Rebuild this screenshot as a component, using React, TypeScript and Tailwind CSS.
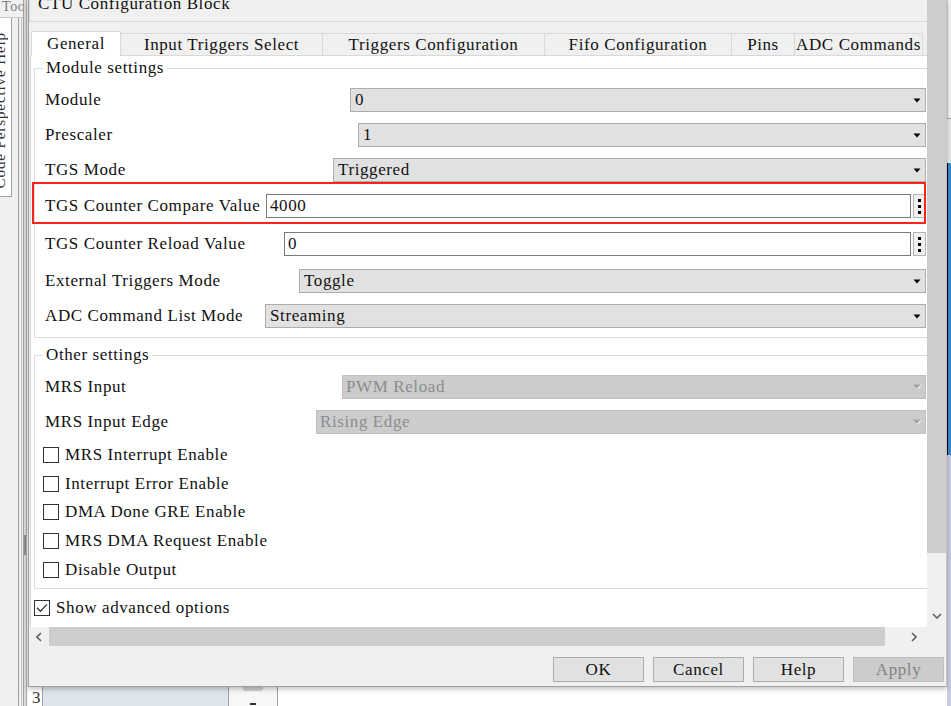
import React from "react";

function Caret({ disabled }: { disabled?: boolean }) {
  if (disabled) {
    return (
      <svg width="10" height="6" viewBox="0 0 10 6" className="shrink-0">
        <path d="M1 0.5H8.5L4.75 4.5Z" fill="#a3a3a3" />
        <path d="M9 1.2L5.4 5.2" stroke="#ffffff" strokeWidth="1" />
      </svg>
    );
  }
  return (
    <svg width="8" height="5" viewBox="0 0 8 5" className="shrink-0">
      <path d="M0.5 0.5H7.5L4 4.5Z" fill="#000000" />
    </svg>
  );
}

function Select({ value, disabled }: { value: string; disabled?: boolean }) {
  return (
    <div
      className={
        disabled
          ? "flex-1 h-[24px] flex items-center justify-between pl-[3px] pr-[3px] bg-[#cccccc] border border-[#bfbfbf] text-[#8c8c8c]"
          : "flex-1 h-[24px] flex items-center justify-between pl-[4px] pr-[4px] bg-[#e1e1e1] border border-[#adadad] text-[#111111]"
      }
    >
      <span className="whitespace-nowrap">{value}</span>
      <Caret disabled={disabled} />
    </div>
  );
}

function ValueInput({ value }: { value: string }) {
  return (
    <>
      <div className="flex-1 h-[24px] flex items-center pl-[3px] bg-white border border-[#7a7a7a]">
        {value}
      </div>
      <div className="ml-[2px] w-[13px] h-[24px] shrink-0 flex flex-col items-center justify-center gap-[3px] bg-[#f0f0f0] border border-[#b4b4b4]">
        <div className="w-[3px] h-[3px] bg-black" />
        <div className="w-[3px] h-[3px] bg-black" />
        <div className="w-[3px] h-[3px] bg-black" />
      </div>
    </>
  );
}

function Row({
  label,
  lw,
  className,
  children,
}: {
  label: string;
  lw: string;
  className: string;
  children: React.ReactNode;
}) {
  return (
    <div className={"relative flex items-center h-[24px] " + className}>
      <div className={lw + " shrink-0 whitespace-nowrap"}>{label}</div>
      {children}
    </div>
  );
}

function Check({
  label,
  checked,
  className,
}: {
  label: string;
  checked?: boolean;
  className: string;
}) {
  return (
    <div className={"flex items-center h-[16px] " + className}>
      <div className="w-[16px] h-[16px] shrink-0 border border-[#333333] bg-white flex items-center justify-center">
        {checked && (
          <svg width="12" height="10" viewBox="0 0 12 10">
            <polyline
              points="1,4.8 4.4,8.2 11,1.4"
              fill="none"
              stroke="#333333"
              strokeWidth="1.3"
            />
          </svg>
        )}
      </div>
      <span className="ml-[6px] whitespace-nowrap">{label}</span>
    </div>
  );
}

function Group({
  title,
  className,
  children,
}: {
  title: string;
  className: string;
  children: React.ReactNode;
}) {
  return (
    <div
      className={
        "relative shrink-0 w-[896px] border border-[#dcdcdc] pl-[10px] pr-[3px] flex flex-col " +
        className
      }
    >
      <span className="absolute left-[8px] top-[-11px] px-[3px] leading-[20px] bg-white whitespace-nowrap">
        {title}
      </span>
      {children}
    </div>
  );
}

function Btn({ label, disabled }: { label: string; disabled?: boolean }) {
  return (
    <div
      className={
        disabled
          ? "w-[91px] h-[25px] flex items-center justify-center bg-[#cccccc] border border-[#bfbfbf] text-[#838383]"
          : "w-[91px] h-[25px] flex items-center justify-center bg-[#e1e1e1] border border-[#adadad] text-[#111111]"
      }
    >
      {label}
    </div>
  );
}

function LeftStrip() {
  return (
    <div className="w-[28px] h-[706px] flex shrink-0">
      <div className="w-[23px] flex flex-col bg-[#f0f0f0]">
        <div className="h-[18px] pl-[2px] text-[14px] leading-[13px] text-[#7a7a7a] overflow-hidden whitespace-nowrap border-b border-[#c8c8c8]">
          Too
        </div>
        <div className="flex flex-1">
          <div className="w-[12px] h-[179px] bg-white border-r border-b border-[#a0a0a0] overflow-hidden flex flex-col justify-end items-start">
            <div className="-ml-[7px] mb-[8px] [writing-mode:vertical-rl] rotate-180 text-[15px] leading-[15px] tracking-[0.9px] text-[#333333] whitespace-nowrap">
              Code Perspective Help
            </div>
          </div>
          <div className="w-[6px]" />
          <div className="w-[1px] bg-[#a0a0a0]" />
          <div className="w-[2px]" />
          <div className="w-[1px] bg-[#c8c8c8]" />
          <div className="w-[1px]" />
        </div>
      </div>
      <div className="w-[1px] bg-[#a0a0a0]" />
      <div className="w-[2px] bg-[#dadada] flex flex-col">
        <div className="h-[535px]" />
        <div className="h-[20px] bg-[#8a8a8a]" />
      </div>
      <div className="w-[1px] bg-[#b0b0b0]" />
      <div className="w-[1px] bg-[#f0f0f0]" />
    </div>
  );
}

function RightStrip() {
  return (
    <div className="w-[4px] h-[706px] flex flex-col shrink-0">
      <div className="h-[118px] bg-[#f3f3f3] border-l border-[#d0d0d0]" />
      <div className="h-[45px] bg-[#e9e9e9] border-t border-[#a0a0a0]" />
      <div className="h-[292px] bg-[#3b8ad6] border-l border-black" />
      <div className="flex-1 bg-[#c9cbe0]" />
    </div>
  );
}

function BottomRow() {
  return (
    <div className="h-[19px] flex shrink-0">
      <div className="w-[14px] bg-white pl-[4px] overflow-hidden">
        <div className="leading-[17px] mt-[2px] text-[#333333]">3</div>
      </div>
      <div className="w-[1px] bg-[#a0a0a0]" />
      <div className="w-[185px] bg-[#dde4ec]" />
      <div className="w-[1px] bg-[#a0a0a0]" />
      <div className="w-[48px] bg-[#f7f7f7] flex flex-col items-center">
        <div className="w-[20px] h-[4px] bg-[#cfcfcf] rounded-b-[2px]" />
        <div className="mt-[12px] w-[6px] h-[2px] bg-[#333333]" />
      </div>
      <div className="w-[1px] bg-[#a0a0a0]" />
      <div className="flex-1 bg-white" />
    </div>
  );
}

function Tab({ label, w }: { label: string; w: string }) {
  return (
    <div
      className={
        "self-end h-[22px] shrink-0 flex items-center justify-center bg-[#f0f0f0] border-t border-r border-[#d9d9d9] whitespace-nowrap " +
        w
      }
    >
      {label}
    </div>
  );
}

function Dialog() {
  return (
    <div className="relative z-10 h-[687px] flex flex-col bg-[#f0f0f0] border-l border-r border-b border-l-[#a0a0a0] border-r-[#c4c4c4] border-b-[#a0a0a0] shadow-[0_2px_5px_rgba(0,0,0,0.25)]">
      <div className="flex h-[627px] shrink-0">
        <div className="w-[898px] h-[627px] overflow-hidden flex flex-col">
          <div className="h-[22px] shrink-0 border-b border-l border-[#d9d9d9] pl-[8px] overflow-hidden">
            <div className="leading-[17px] -mt-[5px] whitespace-nowrap">CTU Configuration Block</div>
          </div>
          <div className="mt-[9px] h-[24px] shrink-0 flex pl-[2px]">
            <div className="self-start relative z-10 h-[25px] w-[90px] shrink-0 flex items-center justify-center bg-white border-t border-l border-r border-[#d9d9d9]">
              General
            </div>
            <Tab label="Input Triggers Select" w="w-[202px]" />
            <Tab label="Triggers Configuration" w="w-[222px]" />
            <Tab label="Fifo Configuration" w="w-[187px]" />
            <Tab label="Pins" w="w-[63px]" />
            <Tab label="ADC Commands" w="w-[128px]" />
          </div>
          <div className="flex-1 min-h-0 w-[910px] shrink-0 ml-[1px] pl-[3px] bg-white border-t border-l border-[#d9d9d9] flex flex-col">
            <Group title="Module settings" className="mt-[12px] pb-[9px]">
              <Row label="Module" lw="w-[305px]" className="mt-[19px]">
                <Select value="0" />
              </Row>
              <Row label="Prescaler" lw="w-[313px]" className="mt-[11px]">
                <Select value="1" />
              </Row>
              <Row label="TGS Mode" lw="w-[288px]" className="mt-[11px]">
                <Select value="Triggered" />
              </Row>
              <Row label="TGS Counter Compare Value" lw="w-[221px]" className="mt-[12px]">
                <ValueInput value="4000" />
                <div className="absolute -left-[13px] -top-[12px] right-0 -bottom-[6px] border-2 border-[#ff2419] pointer-events-none" />
              </Row>
              <Row label="TGS Counter Reload Value" lw="w-[239px]" className="mt-[14px]">
                <ValueInput value="0" />
              </Row>
              <Row label="External Triggers Mode" lw="w-[254px]" className="mt-[13px]">
                <Select value="Toggle" />
              </Row>
              <Row label="ADC Command List Mode" lw="w-[220px]" className="mt-[11px]">
                <Select value="Streaming" />
              </Row>
            </Group>
            <Group title="Other settings" className="mt-[17px] pb-[10px]">
              <Row label="MRS Input" lw="w-[297px]" className="mt-[19px]">
                <Select value="PWM Reload" disabled />
              </Row>
              <Row label="MRS Input Edge" lw="w-[271px]" className="mt-[11px]">
                <Select value="Rising Edge" disabled />
              </Row>
              <Check label="MRS Interrupt Enable" className="mt-[13px] -ml-[2px]" />
              <Check label="Interrupt Error Enable" className="mt-[13px] -ml-[2px]" />
              <Check label="DMA Done GRE Enable" className="mt-[12px] -ml-[2px]" />
              <Check label="MRS DMA Request Enable" className="mt-[13px] -ml-[2px]" />
              <Check label="Disable Output" className="mt-[13px] -ml-[2px]" />
            </Group>
            <Check label="Show advanced options" checked className="mt-[11px]" />
          </div>
        </div>
        <div className="w-[19px] flex flex-col">
          <div className="h-[553px] bg-[#cdcdcd]" />
          <div className="flex-1 flex flex-col items-center justify-end pb-[8px]">
            <svg width="10" height="6" viewBox="0 0 10 6">
              <polyline points="1,1 5,5 9,1" fill="none" stroke="#606060" strokeWidth="1.6" />
            </svg>
          </div>
        </div>
      </div>
      <div className="flex h-[19px] shrink-0">
        <div className="w-[20px] flex items-center justify-center">
          <svg width="6" height="10" viewBox="0 0 6 10">
            <polyline points="5,1 1,5 5,9" fill="none" stroke="#606060" strokeWidth="1.6" />
          </svg>
        </div>
        <div className="w-[836px] bg-[#cdcdcd]" />
        <div className="w-[42px] flex items-center pl-[26px]">
          <svg width="6" height="10" viewBox="0 0 6 10">
            <polyline points="1,1 5,5 1,9" fill="none" stroke="#606060" strokeWidth="1.6" />
          </svg>
        </div>
        <div className="w-[19px]" />
      </div>
      <div className="h-[40px] shrink-0 flex justify-end items-start pt-[11px] pr-[2px] gap-[9px]">
        <Btn label="OK" />
        <Btn label="Cancel" />
        <Btn label="Help" />
        <Btn label="Apply" disabled />
      </div>
    </div>
  );
}

export default function App() {
  return (
    <div className="w-[951px] h-[706px] overflow-hidden bg-white flex font-['Liberation_Serif',serif] text-[17px] tracking-[0.6px] text-[#111111]">
      <LeftStrip />
      <div className="w-[919px] flex flex-col shrink-0">
        <Dialog />
        <BottomRow />
      </div>
      <RightStrip />
    </div>
  );
}
